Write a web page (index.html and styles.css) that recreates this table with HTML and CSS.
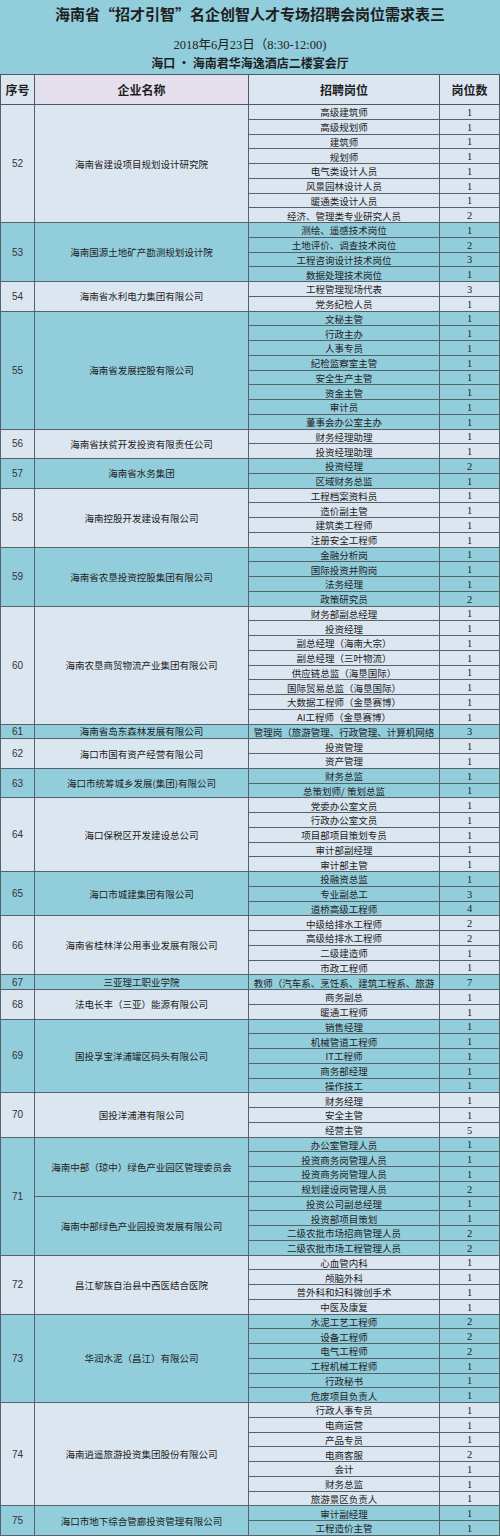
FILE: index.html
```html
<!DOCTYPE html>
<html lang="zh-CN">
<head>
<meta charset="utf-8">
<title>岗位需求表三</title>
<link rel="stylesheet" href="styles.css">
</head>
<body>
<div class="sheet">
  <header class="banner">
    <h1 class="title">海南省“招才引智”名企创智人才专场招聘会岗位需求表三</h1>
    <p class="date">2018年6月23日（8:30-12:00)</p>
    <p class="place">海口 · 海南君华海逸酒店二楼宴会厅</p>
  </header>

  <div class="thead">
    <div class="th c1">序号</div>
    <div class="th c2 lav">企业名称</div>
    <div class="th c3">招聘岗位</div>
    <div class="th c4">岗位数</div>
  </div>

  <div class="grp light">
    <div class="seq s8">52</div><div class="co s8">海南省建设项目规划设计研究院</div>
    <div class="pos">高级建筑师</div><div class="num">1</div>
    <div class="pos">高级规划师</div><div class="num">1</div>
    <div class="pos">建筑师</div><div class="num">1</div>
    <div class="pos">规划师</div><div class="num">1</div>
    <div class="pos">电气类设计人员</div><div class="num">1</div>
    <div class="pos">风景园林设计人员</div><div class="num">1</div>
    <div class="pos">暖通类设计人员</div><div class="num">1</div>
    <div class="pos">经济、管理类专业研究人员</div><div class="num">2</div>
  </div>

  <div class="grp teal">
    <div class="seq s4">53</div><div class="co s4">海南国源土地矿产勘测规划设计院</div>
    <div class="pos">测绘、遥感技术岗位</div><div class="num">1</div>
    <div class="pos">土地评价、调查技术岗位</div><div class="num">2</div>
    <div class="pos">工程咨询设计技术岗位</div><div class="num">3</div>
    <div class="pos">数据处理技术岗位</div><div class="num">1</div>
  </div>

  <div class="grp light">
    <div class="seq s2">54</div><div class="co s2">海南省水利电力集团有限公司</div>
    <div class="pos">工程管理现场代表</div><div class="num">3</div>
    <div class="pos">党务纪检人员</div><div class="num">1</div>
  </div>

  <div class="grp teal">
    <div class="seq s8">55</div><div class="co s8">海南省发展控股有限公司</div>
    <div class="pos">文秘主管</div><div class="num">1</div>
    <div class="pos">行政主办</div><div class="num">1</div>
    <div class="pos">人事专员</div><div class="num">1</div>
    <div class="pos">纪检监察室主管</div><div class="num">1</div>
    <div class="pos">安全生产主管</div><div class="num">1</div>
    <div class="pos">资金主管</div><div class="num">1</div>
    <div class="pos">审计员</div><div class="num">1</div>
    <div class="pos">董事会办公室主办</div><div class="num">1</div>
  </div>

  <div class="grp light">
    <div class="seq s2">56</div><div class="co s2">海南省扶贫开发投资有限责任公司</div>
    <div class="pos">财务经理助理</div><div class="num">1</div>
    <div class="pos">投资经理助理</div><div class="num">1</div>
  </div>

  <div class="grp teal">
    <div class="seq s2">57</div><div class="co s2">海南省水务集团</div>
    <div class="pos">投资经理</div><div class="num">2</div>
    <div class="pos">区域财务总监</div><div class="num">1</div>
  </div>

  <div class="grp light">
    <div class="seq s4">58</div><div class="co s4">海南控股开发建设有限公司</div>
    <div class="pos">工程档案资料员</div><div class="num">1</div>
    <div class="pos">造价副主管</div><div class="num">1</div>
    <div class="pos">建筑类工程师</div><div class="num">1</div>
    <div class="pos">注册安全工程师</div><div class="num">1</div>
  </div>

  <div class="grp teal">
    <div class="seq s4">59</div><div class="co s4">海南省农垦投资控股集团有限公司</div>
    <div class="pos">金融分析岗</div><div class="num">1</div>
    <div class="pos">国际投资并购岗</div><div class="num">1</div>
    <div class="pos">法务经理</div><div class="num">1</div>
    <div class="pos">政策研究员</div><div class="num">2</div>
  </div>

  <div class="grp light">
    <div class="seq s8">60</div><div class="co s8">海南农垦商贸物流产业集团有限公司</div>
    <div class="pos">财务部副总经理</div><div class="num">1</div>
    <div class="pos">投资经理</div><div class="num">1</div>
    <div class="pos">副总经理（海南大宗）</div><div class="num">1</div>
    <div class="pos">副总经理（三叶物流）</div><div class="num">1</div>
    <div class="pos">供应链总监（海垦国际）</div><div class="num">1</div>
    <div class="pos">国际贸易总监（海垦国际）</div><div class="num">1</div>
    <div class="pos">大数据工程师（金垦赛博）</div><div class="num">1</div>
    <div class="pos">AI工程师（金垦赛博）</div><div class="num">1</div>
  </div>

  <div class="grp teal">
    <div class="seq">61</div><div class="co">海南省岛东森林发展有限公司</div>
    <div class="pos">管理岗（旅游管理、行政管理、计算机网络</div><div class="num">3</div>
  </div>

  <div class="grp light">
    <div class="seq s2">62</div><div class="co s2">海口市国有资产经营有限公司</div>
    <div class="pos">投资管理</div><div class="num">1</div>
    <div class="pos">资产管理</div><div class="num">1</div>
  </div>

  <div class="grp teal">
    <div class="seq s2">63</div><div class="co s2">海口市统筹城乡发展(集团)有限公司</div>
    <div class="pos">财务总监</div><div class="num">1</div>
    <div class="pos">总策划师/ 策划总监</div><div class="num">1</div>
  </div>

  <div class="grp light">
    <div class="seq s5">64</div><div class="co s5">海口保税区开发建设总公司</div>
    <div class="pos">党委办公室文员</div><div class="num">1</div>
    <div class="pos">行政办公室文员</div><div class="num">1</div>
    <div class="pos">项目部项目策划专员</div><div class="num">1</div>
    <div class="pos">审计部副经理</div><div class="num">1</div>
    <div class="pos">审计部主管</div><div class="num">1</div>
  </div>

  <div class="grp teal">
    <div class="seq s3">65</div><div class="co s3">海口市城建集团有限公司</div>
    <div class="pos">投融资总监</div><div class="num">1</div>
    <div class="pos">专业副总工</div><div class="num">3</div>
    <div class="pos">道桥高级工程师</div><div class="num">4</div>
  </div>

  <div class="grp light">
    <div class="seq s4">66</div><div class="co s4">海南省桂林洋公用事业发展有限公司</div>
    <div class="pos">中级给排水工程师</div><div class="num">2</div>
    <div class="pos">高级给排水工程师</div><div class="num">2</div>
    <div class="pos">二级建造师</div><div class="num">1</div>
    <div class="pos">市政工程师</div><div class="num">1</div>
  </div>

  <div class="grp teal">
    <div class="seq">67</div><div class="co">三亚理工职业学院</div>
    <div class="pos">教师（汽车系、烹饪系、建筑工程系、旅游</div><div class="num">7</div>
  </div>

  <div class="grp light">
    <div class="seq s2">68</div><div class="co s2">法电长丰（三亚）能源有限公司</div>
    <div class="pos">商务副总</div><div class="num">1</div>
    <div class="pos">暖通工程师</div><div class="num">1</div>
  </div>

  <div class="grp teal">
    <div class="seq s5">69</div><div class="co s5">国投孚宝洋浦罐区码头有限公司</div>
    <div class="pos">销售经理</div><div class="num">1</div>
    <div class="pos">机械管道工程师</div><div class="num">1</div>
    <div class="pos">IT工程师</div><div class="num">1</div>
    <div class="pos">商务部经理</div><div class="num">1</div>
    <div class="pos">操作技工</div><div class="num">1</div>
  </div>

  <div class="grp light">
    <div class="seq s3">70</div><div class="co s3">国投洋浦港有限公司</div>
    <div class="pos">财务经理</div><div class="num">1</div>
    <div class="pos">安全主管</div><div class="num">1</div>
    <div class="pos">经营主管</div><div class="num">5</div>
  </div>

  <div class="grp teal">
    <div class="seq s8">71</div><div class="co s4">海南中部（琼中）绿色产业园区管理委员会</div>
    <div class="pos">办公室管理人员</div><div class="num">1</div>
    <div class="pos">投资商务岗管理人员</div><div class="num">1</div>
    <div class="pos">投资商务岗管理人员</div><div class="num">1</div>
    <div class="pos">规划建设岗管理人员</div><div class="num">2</div>
    <div class="co s4">海南中部绿色产业园投资发展有限公司</div>
    <div class="pos">投资公司副总经理</div><div class="num">1</div>
    <div class="pos">投资部项目策划</div><div class="num">1</div>
    <div class="pos">二级农批市场招商管理人员</div><div class="num">2</div>
    <div class="pos">二级农批市场工程管理人员</div><div class="num">2</div>
  </div>

  <div class="grp light">
    <div class="seq s4">72</div><div class="co s4">昌江黎族自治县中西医结合医院</div>
    <div class="pos">心血管内科</div><div class="num">1</div>
    <div class="pos">颅脑外科</div><div class="num">1</div>
    <div class="pos">普外科和妇科微创手术</div><div class="num">1</div>
    <div class="pos">中医及康复</div><div class="num">1</div>
  </div>

  <div class="grp teal">
    <div class="seq s6">73</div><div class="co s6">华润水泥（昌江）有限公司</div>
    <div class="pos">水泥工艺工程师</div><div class="num">2</div>
    <div class="pos">设备工程师</div><div class="num">2</div>
    <div class="pos">电气工程师</div><div class="num">2</div>
    <div class="pos">工程机械工程师</div><div class="num">1</div>
    <div class="pos">行政秘书</div><div class="num">1</div>
    <div class="pos">危废项目负责人</div><div class="num">1</div>
  </div>

  <div class="grp light">
    <div class="seq s7">74</div><div class="co s7">海南逍遥旅游投资集团股份有限公司</div>
    <div class="pos">行政人事专员</div><div class="num">1</div>
    <div class="pos">电商运营</div><div class="num">1</div>
    <div class="pos">产品专员</div><div class="num">1</div>
    <div class="pos">电商客服</div><div class="num">2</div>
    <div class="pos">会计</div><div class="num">1</div>
    <div class="pos">财务总监</div><div class="num">1</div>
    <div class="pos">旅游景区负责人</div><div class="num">1</div>
  </div>

  <div class="grp teal">
    <div class="seq s2">75</div><div class="co s2">海口市地下综合管廊投资管理有限公司</div>
    <div class="pos">审计副经理</div><div class="num">1</div>
    <div class="pos">工程造价主管</div><div class="num">1</div>
  </div>
</div>
</body>
</html>
```

FILE: styles.css
```css
* {
  box-sizing: border-box;
}

html, body {
  margin: 0;
  padding: 0;
  background: #ffffff;
}

body {
  font-family: "Noto Sans CJK SC", "Liberation Sans", sans-serif;
  color: #222;
}

.sheet {
  width: 500px;
}

/* ---------- banner ---------- */
.banner {
  background: #92cddc;
  height: 74px;
  text-align: center;
}

.title {
  margin: 0;
  font-size: 15px;
  line-height: 28px;
  font-weight: 700;
  color: #1e1e1e;
}

.date {
  margin: 9px 0 0;
  font-family: "Liberation Serif", "Noto Sans CJK SC", serif;
  font-size: 12.5px;
  line-height: 16px;
  color: #222;
}

.place {
  margin: 1px 0 0;
  font-size: 12px;
  line-height: 18px;
  font-weight: 700;
  color: #1e1e1e;
}

/* ---------- header row ---------- */
.thead {
  display: grid;
  grid-template-columns: 35px 214px 191px 60px;
  height: 31px;
  border-top: 1px solid #4e5963;
}

.th {
  display: flex;
  align-items: center;
  justify-content: center;
  background: #dce6f1;
  border-right: 1px solid #4e5963;
  border-bottom: 1px solid #4e5963;
  font-size: 12px;
  font-weight: 700;
  color: #1e1e1e;
}

.th.c1 {
  border-left: 1px solid #4e5963;
}

.th.lav {
  background: #e4dfec;
}

/* ---------- company groups ---------- */
.grp {
  display: grid;
  grid-template-columns: 35px 214px 191px 60px;
  grid-auto-rows: 14.75px;
}

.grp.light {
  background: #dce6f0;
}

.grp.teal {
  background: #92cddc;
}

.seq, .co, .pos, .num {
  display: flex;
  align-items: center;
  justify-content: center;
  border-right: 1px solid #55616b;
  border-bottom: 1px solid #55616b;
  white-space: nowrap;
  overflow: hidden;
}

.seq {
  grid-column: 1;
  border-left: 1px solid #55616b;
  font-family: "Liberation Sans", sans-serif;
  font-size: 10px;
  color: #333;
}

.co {
  grid-column: 2;
  font-size: 9.5px;
  color: #222;
}

.pos {
  grid-column: 3;
  font-size: 9.5px;
  color: #222;
  padding-top: 1px;
}

.num {
  grid-column: 4;
  font-family: "Liberation Serif", serif;
  font-size: 10.5px;
  color: #222;
  padding-top: 1px;
}

.s2 { grid-row: span 2; }
.s3 { grid-row: span 3; }
.s4 { grid-row: span 4; }
.s5 { grid-row: span 5; }
.s6 { grid-row: span 6; }
.s7 { grid-row: span 7; }
.s8 { grid-row: span 8; }
```
